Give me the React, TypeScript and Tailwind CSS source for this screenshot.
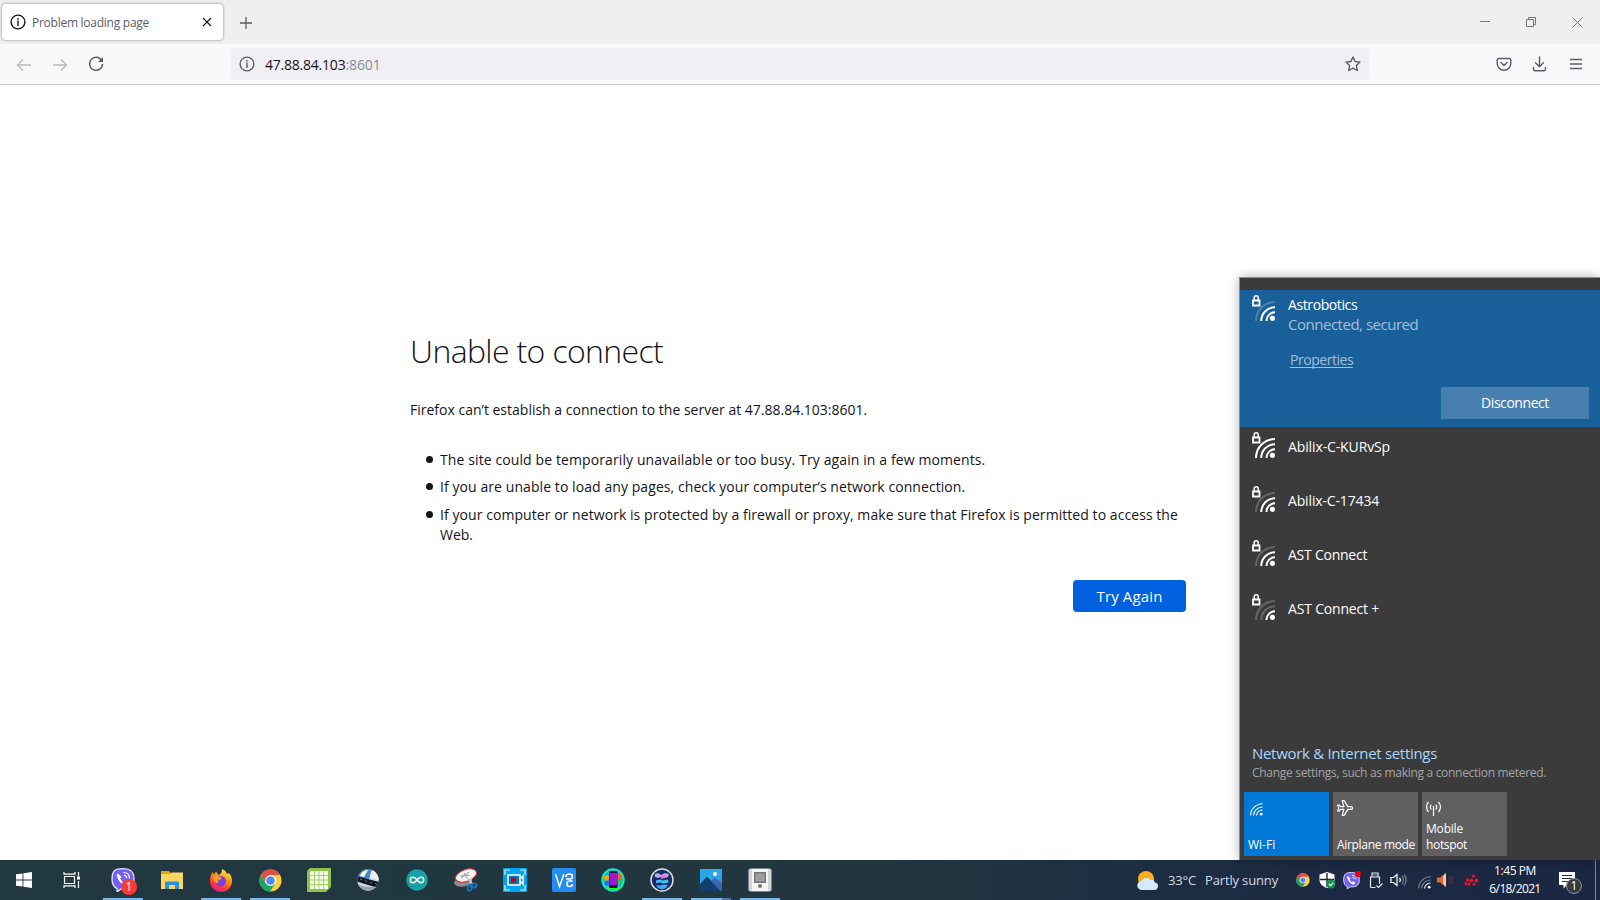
import React from "react";

type P = { children?: React.ReactNode; className?: string };
const T = ({ children, className = "" }: P) => (
  <span className={"whitespace-nowrap " + className}>{children}</span>
);

function Info({ color }: { color: string }) {
  return (
    <svg width="16" height="16" viewBox="0 0 16 16" fill="none" stroke={color} strokeWidth="1.4" className="shrink-0">
      <circle cx="8" cy="8" r="6.9" />
      <path d="M8 7v4.5" strokeLinecap="round" />
      <circle cx="8" cy="4.8" r=".9" fill={color} stroke="none" />
    </svg>
  );
}

function TabBar() {
  return (
    <header className="flex h-11 items-center bg-[#efefef]">
      <div className="ml-0.5 flex h-9 w-[221px] items-center rounded bg-white pl-2 shadow-[0_0_3px_rgba(0,0,0,0.45)]">
        <Info color="#15141a" />
        <T className="mt-0.5 ml-1.5 text-[12px] tracking-[-0.26px] text-[#5b5b66]">Problem loading page</T>
        <svg width="10" height="10" viewBox="0 0 10 10" className="mr-[11px] ml-auto" stroke="#15141a" strokeWidth="1.1">
          <path d="M1 1l8 8M9 1L1 9" />
        </svg>
      </div>
      <svg width="14" height="14" viewBox="0 0 14 14" className="mt-px ml-4" stroke="#5b5b66" strokeWidth="1.3">
        <path d="M7 1v12M1 7h12" />
      </svg>
      <div className="mr-[17px] ml-auto flex items-center gap-9 text-[#777]">
        <svg width="10" height="11" viewBox="0 0 10 11" stroke="currentColor"><path d="M0 4.500h10" /></svg>
        <svg width="10" height="11" viewBox="0 0 10 11" fill="none" stroke="currentColor"><path d="M.5 2.500h7v7h-7zM2.500 2.500v-2h7v7h-2" /></svg>
        <svg width="11" height="11" viewBox="0 0 11 11" stroke="currentColor"><path d="M.5.500l10 10M10.500.500l-10 10" /></svg>
      </div>
    </header>
  );
}

function Toolbar() {
  return (
    <nav className="flex h-[41px] items-center border-b border-[#cccccf] bg-[#f9f9fb]">
      <svg width="16" height="16" viewBox="0 0 16 16" fill="none" stroke="#b9b9bf" strokeWidth="1.3" className="mt-px ml-4"><path d="M15 8H1.500M7 2.500L1.500 8 7 13.500" /></svg>
      <svg width="16" height="16" viewBox="0 0 16 16" fill="none" stroke="#b9b9bf" strokeWidth="1.3" className="mt-px ml-5"><path d="M1 8h13.500M9 2.500L14.500 8 9 13.500" /></svg>
      <svg width="16" height="16" viewBox="0 0 16 16" fill="none" stroke="#5b5b66" strokeWidth="1.5" className="ml-5">
        <path d="M13.600 4.500A6.500 6.500 0 1 0 14.500 8" /><path d="M15 1v5h-5z" fill="#5b5b66" stroke="none" />
      </svg>
      <div className="ml-[127px] flex h-8 w-[1138px] items-center rounded bg-[#f0f0f4] pr-2 pl-[7.500px]">
        <Info color="#5b5b66" />
        <span className="mt-0.5 ml-[10.500px] flex text-[14px] leading-5">
          <T className="tracking-[-0.22px] text-[#15141a]">47.88.84.103</T>
          <T className="tracking-[-0.1px] text-[#8b8b94]">:8601</T>
        </span>
        <svg width="16" height="16" viewBox="0 0 16 16" fill="none" stroke="#5b5b66" strokeWidth="1.4" strokeLinejoin="round" className="ml-auto">
          <path d="M8 1l2.100 4.500 4.900.6-3.600 3.400.9 5L8 12.100l-4.300 2.400.9-5L1 6.100l4.900-.6z" />
        </svg>
      </div>
      <svg width="16" height="16" viewBox="0 0 16 16" fill="none" stroke="#5b5b66" strokeWidth="1.4" strokeLinecap="round" strokeLinejoin="round" className="ml-[127px]">
        <path d="M2.500 2.500h11a1.300 1.300 0 0 1 1.300 1.300V7.500a6.800 6.800 0 0 1-13.600 0V3.800a1.300 1.300 0 0 1 1.300-1.300z" /><path d="M4.800 6.500L8 9.500l3.200-3" />
      </svg>
      <svg width="16" height="16" viewBox="0 0 16 16" fill="none" stroke="#5b5b66" strokeWidth="1.400" strokeLinecap="round" strokeLinejoin="round" className="ml-5">
        <path d="M7.500 1v9.500M3.500 6.800l4 4 4-4M1.500 11.500v1.700a1.500 1.500 0 0 0 1.500 1.500h9a1.500 1.500 0 0 0 1.500-1.500v-1.700" />
      </svg>
      <svg width="12" height="12" viewBox="0 0 12 12" stroke="#5b5b66" strokeWidth="1.300" className="ml-[22px]"><path d="M0 1.500h12M0 6h12M0 10.500h12" /></svg>
    </nav>
  );
}

function Bullet({ children, className = "" }: P) {
  return (
    <li className={"flex " + className}>
      <span className="mt-1.5 mr-[7px] size-[7px] shrink-0 rounded-full bg-[#15141a]" />
      <span className="flex flex-col">{children}</span>
    </li>
  );
}

function ErrorPage() {
  return (
    <section className="w-[776px] text-[14px] leading-5 text-[#15141a]">
      <h1 className="flex h-12 items-center text-[32px] leading-[48px] font-light"><T className="tracking-[-0.64px]">Unable to connect</T></h1>
      <p className="mt-[25px]"><T>Firefox can’t establish a connection to the server at 47.88.84.103:8601.</T></p>
      <ul className="mt-[30px] flex flex-col pl-4">
        <Bullet><T className="tracking-[0.106px]">The site could be temporarily unavailable or too busy. Try again in a few moments.</T></Bullet>
        <Bullet className="mt-[7px]"><T className="tracking-[0.075px]">If you are unable to load any pages, check your computer’s network connection.</T></Bullet>
        <Bullet className="mt-2">
          <T className="tracking-[0.062px]">If your computer or network is protected by a firewall or proxy, make sure that Firefox is permitted to access the</T>
          <T>Web.</T>
        </Bullet>
      </ul>
      <div className="mt-[35px] flex justify-end">
        <button className="h-8 w-[113px] rounded bg-[#0061e0] text-[15px] text-[#fbfbfe]"><T className="tracking-[0.13px]">Try Again</T></button>
      </div>
    </section>
  );
}

function Signal({ level, dim }: { level: number; dim: string }) {
  const c = (n: number) => (level >= n ? "#fff" : dim);
  return (
    <svg width="24" height="27" viewBox="0 0 24 27" fill="none" strokeWidth="2" className="shrink-0">
      <path d="M1 5.500h6.500v5H1z" stroke="#fff" strokeWidth="1.800" />
      <path d="M2.200 5V2.800a2 2 0 0 1 4 0V5" stroke="#fff" strokeWidth="1.500" />
      <path d="M4 26A19 19 0 0 1 23 7" stroke={c(4)} />
      <path d="M9.200 26A13.800 13.800 0 0 1 23 12.200" stroke={c(3)} />
      <path d="M14.500 26A8.500 8.500 0 0 1 23 17.300" stroke={c(2)} />
      <circle cx="20.400" cy="23.300" r="2.600" fill="#fff" />
    </svg>
  );
}

function WifiGlyph({ dim }: { dim?: string }) {
  return (
    <svg width="13" height="13" viewBox="0 0 13 13" fill="none" stroke="#fff" strokeWidth="1.100">
      <path d="M.6 12.500A12 12 0 0 1 12.600.8" stroke={dim || "#fff"} /><path d="M3.600 12.500a9 9 0 0 1 9-8.500" stroke={dim || "#fff"} /><path d="M6.500 12.500a6 6 0 0 1 6-5.500" /><circle cx="11.200" cy="11.200" r="1.400" fill="#fff" stroke="none" />
    </svg>
  );
}

const networks = [
  { name: "Abilix-C-KURvSp", level: 4, tracking: "tracking-[-0.12px]" },
  { name: "Abilix-C-17434", level: 3, tracking: "tracking-[-0.15px]" },
  { name: "AST Connect", level: 3, tracking: "tracking-[-0.24px]" },
  { name: "AST Connect +", level: 2, tracking: "tracking-[-0.18px]" },
];

function NetworkPanel() {
  return (
    <aside className="absolute right-0 bottom-10 flex h-[583px] w-[361px] flex-col border-t border-l border-[#8c8c8c] bg-[#3b3b3b] text-[14px] leading-5 text-white shadow-[0_0_10px_rgba(0,0,0,0.3)]">
      <div className="mt-3 flex h-[137px] flex-col bg-[#19609a] pt-[5px] pr-[11px] pl-3">
        <div className="flex">
          <Signal level={3} dim="#4682b0" />
          <div className="ml-3 flex flex-col">
            <T className="tracking-[-0.4px]">Astrobotics</T>
            <T className="-mt-px text-[15px] tracking-[-0.48px] text-[#a3bfd7]">Connected, secured</T>
            <span className="mt-4 ml-0.5 flex"><T className="h-[18px] border-b border-[#a3bfd7] tracking-[-0.46px] text-[#a3bfd7]">Properties</T></span>
          </div>
        </div>
        <button className="mt-auto mb-2 h-8 w-[148px] self-end bg-[#4780ae]"><T className="tracking-[-0.44px]">Disconnect</T></button>
      </div>
      {networks.map((n) => (
        <div key={n.name} className="flex h-[54px] pt-[5px] pl-3">
          <Signal level={n.level} dim="#666" />
          <T className={"mt-[5px] ml-3 " + n.tracking}>{n.name}</T>
        </div>
      ))}
      <div className="mt-auto flex flex-col pl-3">
        <T className="text-[15px] tracking-[-0.3px] text-[#a6d8ff]">Network &amp; Internet settings</T>
        <T className="text-[12px] tracking-[-0.3px] text-[#a5a5a5]">Change settings, such as making a connection metered.</T>
      </div>
      <div className="mt-[9px] mb-1 ml-1 flex gap-1 text-[12px] leading-4">
        <div className="flex h-16 w-[85px] flex-col justify-between bg-[#0078d7] px-1 pt-[11px] pb-[3px]">
          <span className="ml-0.5"><WifiGlyph /></span><T>Wi-Fi</T>
        </div>
        <div className="flex h-16 w-[85px] flex-col justify-between bg-[#606060] px-1 pt-2 pb-[3px]">
          <svg width="16" height="16" viewBox="0 0 16 16" fill="none" stroke="#fff" strokeWidth="1.200" strokeLinejoin="round"><path d="M15.500 8c0-.9-.7-1.400-1.600-1.400h-3.100L7.300.7H5.200L6.900 6.600H3.600L2.300 5H.7L1.700 8l-1 3h1.600l1.300-1.600h3.300L5.200 15.300h2.100l3.500-5.900h3.100c.9 0 1.600-.5 1.600-1.400z" /></svg>
          <T className="tracking-[-0.32px]">Airplane mode</T>
        </div>
        <div className="flex h-16 w-[85px] flex-col justify-between bg-[#606060] px-1 pt-[9px] pb-[3px]">
          <svg width="16" height="15" viewBox="0 0 16 15" fill="none" stroke="#fff" strokeWidth="1.200"><path d="M7.500 5v10M5.300 3.500a4 4 0 0 0 0 5M9.700 3.500a4 4 0 0 1 0 5M2.500 1a7.500 7.500 0 0 0 0 10M12.500 1a7.500 7.500 0 0 1 0 10" /></svg>
          <span className="flex flex-col"><T className="tracking-[-0.19px]">Mobile</T><T className="tracking-[-0.34px]">hotspot</T></span>
        </div>
      </div>
    </aside>
  );
}

const Chrome = ({ s }: { s: number }) => (
  <svg width={s} height={s} viewBox="0 0 24 24">
    <circle cx="12" cy="12" r="11.500" fill="#ffcd40" />
    <path d="M12 .5A11.500 11.500 0 0 1 22 6.300H12L7 14.800 2 6.200A11.500 11.500 0 0 1 12 .5z" fill="#dd5144" />
    <path d="M2 6.200A11.500 11.500 0 0 0 11.500 23.500L17 14.900H7z" fill="#1da462" />
    <circle cx="12" cy="12" r="5.700" fill="#fff" /><circle cx="12" cy="12" r="4.500" fill="#4c8bf5" />
  </svg>
);

const Viber = ({ s }: { s: number }) => (
  <svg width={s} height={s} viewBox="0 0 24 24">
    <path d="M12 .7C4 .7 1 3 1 11c0 5 1.500 8 5 9.500V24l4-3h2c8 0 11-3 11-10S20 .7 12 .7z" fill="#7360f2" stroke="#e6e2ff" strokeWidth="1.300" />
    <path d="M7 5.500c-1.500 1-1.500 2.500-.5 4.500 1.500 3.500 4 6 7.500 7.500 1.500.6 3-.5 3.500-2l-3-2.300-1.700 1.300c-2-1-3-2.500-3.600-4.200L10.500 9z" fill="#fff" />
    <path d="M12.500 4.500c4 0 6 2.500 6 6M12.800 7.300c2 0 3 1.200 3 3" stroke="#fff" fill="none" strokeWidth="1.200" />
  </svg>
);

const appIcons: React.ReactNode[] = [
  <svg width="16" height="16" viewBox="0 0 16 16" fill="#fff" className="mr-0.5"><path d="M0 2.300L6.500 1.400v6.100H0zM7.400 1.300L16 0v7.500H7.400zM0 8.400h6.500v6.200L0 13.700zM7.400 8.400H16V16l-8.600-1.300z" /></svg>,
  <svg width="18" height="16" viewBox="0 0 18 16" fill="none" stroke="#fff" strokeWidth="1.200" className="mr-1"><path d="M1.500 4.500h10v7h-10zM1 0v2.200h11V0M1 16v-2.200h11V16M15.500 0v4M15.500 9v7" /><path d="M14 4.500h3v3h-3z" fill="#fff" stroke="none" /></svg>,
  <span className="relative flex"><Viber s={24} /><span className="absolute -right-[2px] -bottom-[3px] flex size-4 items-center justify-center rounded-full bg-[#fb3b30] text-[12px] text-white">1</span></span>,
  <svg width="22" height="18" viewBox="0 0 22 18"><path d="M0 0h8l1.500 2H22v16H0z" fill="#e5a50a" /><path d="M0 3h9l1.500-1.500H22V18H0z" fill="#ffd562" /><path d="M4 18v-6.500a1 1 0 0 1 1-1h12a1 1 0 0 1 1 1V18h-4v-4H8v4z" fill="#2d8fdd" /></svg>,
  <svg width="24" height="24" viewBox="0 0 24 24">
    <defs><linearGradient id="ff" x1=".8" y1="0" x2=".3" y2="1"><stop offset="0" stopColor="#fff34f" /><stop offset=".4" stopColor="#ff980e" /><stop offset=".75" stopColor="#ff3647" /><stop offset="1" stopColor="#e31587" /></linearGradient></defs>
    <path d="M13 1c3 1 4.500 3 5 5l2-1c2 2 3 5 3 8a11 11 0 0 1-22 0C1 9 2 6.500 3.500 4L5 6.500l2-3L9.500 7C11 6.500 13 5 13 1z" fill="url(#ff)" />
    <circle cx="11.800" cy="13.200" r="5.200" fill="#7542e5" /><path d="M4 9c3-1.500 5.500-1 8 .5 1.500 1 .5 2-1.500 2.200-1.500.3-2 1.800-1 3.300-3 .5-5.500-2-5.500-6z" fill="#ff9a1f" />
  </svg>,
  <Chrome s={23} />,
  <svg width="24" height="24" viewBox="0 0 24 24"><path d="M3 0h21v19l-5 5H0V3z" fill="#8bc34a" /><path d="M3 3h18v18H3z" fill="#f4fae6" /><path d="M3 7.500h18M3 12h18M3 16.500h18M7.500 3v18M12 3v18M16.500 3v18" stroke="#a4d26b" /></svg>,
  <svg width="22" height="22" viewBox="0 0 22 22">
    <defs><clipPath id="ball"><circle cx="11" cy="11" r="10.700" /></clipPath></defs>
    <g clipPath="url(#ball)"><path d="M0 0h22v22H0z" fill="#cfd9e4" /><path d="M0 9C1 1 8-2 16 0L12 10z" fill="#3f86cb" /><path d="M3 7c1-4 5-6 8-6L7 8z" fill="#fff" /><path d="M13 9c0-4 1-7 3-9l6 5v6z" fill="#e9eef3" /><path d="M0 15c6 3 14 4 20 2l-4 6H4z" fill="#98a3ae" /><path d="M-1 7l8 2 15 4v5l-6-.5L0 12.500z" fill="#10151b" /><path d="M3 9.500l2 1.500M8 11.500l2 1.500M13 13l2 1.500M18 14l2 1.500" stroke="#4c6379" strokeWidth="1.200" /></g>
  </svg>,
  <svg width="22" height="22" viewBox="0 0 22 22" fill="none"><circle cx="11" cy="11" r="10.700" fill="#17a1a5" /><path d="M11 11c-1.500-2-2.500-2.700-4-2.700a2.700 2.700 0 0 0 0 5.400c1.500 0 2.500-.7 4-2.700zm0 0c1.500-2 2.500-2.700 4-2.700a2.700 2.700 0 0 1 0 5.400c-1.500 0-2.500-.7-4-2.700z" stroke="#fff" strokeWidth="1.400" /></svg>,
  <svg width="24" height="24" viewBox="0 0 24 24" fill="none"><ellipse cx="9" cy="14" rx="9" ry="4.500" fill="#8a8a8a" transform="rotate(-8 9 14)" /><ellipse cx="12" cy="7.500" rx="11" ry="5.800" fill="#f4f4f4" stroke="#d33" transform="rotate(-20 12 7.500)" /><path d="M7 10l8-6M10 5l3 5M6 8l10-1" stroke="#999" /><path d="M13 10l6 6M18 9l-2 7" stroke="#c5ccd6" strokeWidth="1.400" /><ellipse cx="15.500" cy="20" rx="2" ry="2.700" stroke="#1877c9" strokeWidth="1.700" /><ellipse cx="20" cy="17.500" rx="2.500" ry="2" stroke="#1877c9" strokeWidth="1.700" /></svg>,
  <svg width="24" height="24" viewBox="0 0 24 24" fill="none"><path d="M0 0h24v24H0z" fill="#00a4f0" /><path d="M2 7V2h5M17 2h5v5M22 17v5h-5M7 22H2v-5" stroke="#d9f3ff" strokeWidth="1.200" /><path d="M5 7h12v10H5zM17 11l3-3v8l-3-3" fill="#087ab8" stroke="#fff" strokeWidth="1.500" /><path d="M8 9.500h5v5H8z" fill="#c00018" /></svg>,
  <svg width="24" height="24" viewBox="0 0 24 24" fill="none"><rect width="24" height="24" rx="2" fill="#258cf4" /><path d="M3.500 6l4 12.500L12 6M14 11h3.500c4 0 4-5 0-5-2.500 0-3.500 1-3.500 3M20.500 13h-3c-3.500 0-3.500 5.500 0 5.500 2 0 3-.8 3-2.500" stroke="#fff" strokeWidth="1.500" /></svg>,
  <svg width="24" height="24" viewBox="0 0 24 24"><circle cx="12" cy="12" r="10.800" fill="#12b9c9" stroke="#19e6c1" strokeWidth="1.800" /><circle cx="5.500" cy="10" r="2.800" fill="#f0a018" /><circle cx="18.500" cy="8.500" r="2.800" fill="#e8682c" /><circle cx="18.500" cy="14" r="2.400" fill="#1bd43a" /><circle cx="6" cy="15" r="2.200" fill="#2468ed" /><path d="M6 18.500h12.500v2.500H6z" fill="#1bff35" /><rect x="8" y="3" width="8.500" height="17" rx="1" fill="#25123d" /><path d="M8.500 5h7.500v12H8.500z" fill="#a018d2" /></svg>,
  <svg width="24" height="24" viewBox="0 0 24 24" fill="none"><circle cx="12" cy="12" r="11" fill="#142c61" stroke="#d9dce7" strokeWidth="1.500" /><path d="M5 6l3-1 3 2 4-2 4 1-1 3-3 1-4-1-3 1-3-1z" fill="#c3a0ef" /><path d="M11 8l5-1-1 3-4 1z" fill="#f56ad2" /><path d="M6 12.500l4-1 3 1 5-1 .5 3-5 1-3.500-1-4 .5z" fill="#43bdf5" /><path d="M6 17l4 .5 3-1 5 .5-2 3-4 1.500L8 20z" fill="#45a4ee" /></svg>,
  <svg width="22" height="22" viewBox="0 0 22 22"><path d="M0 0h22v22H0z" fill="#28a8ea" /><path d="M22 9l-8 4v9h8z" fill="#5a83cd" /><path d="M0 15l7-7.500L21 22H0z" fill="#143d70" /><path d="M11 12l4-3.500 7 6.500v7h-1z" fill="#3568ae" /><circle cx="15" cy="5" r="2" fill="#fff" /></svg>,
  <svg width="24" height="24" viewBox="0 0 24 24"><rect x=".5" y=".5" width="23" height="23" rx="2" fill="#d5d5d5" /><path d="M4 1h16v22H4z" fill="#f4f4f4" /><path d="M6 4h12v11H6z" fill="#73767a" /><path d="M7.500 5.500h9v8h-9z" fill="#9da0a2" /><circle cx="12" cy="18" r="2" fill="#777" /></svg>,
];
const running = [2, 4, 5, 13, 14, 15];

function Taskbar() {
  return (
    <footer className="flex h-10 bg-[linear-gradient(90deg,#223840_0%,#21363f_55%,#1c2c42_75%,#1a2743_100%)] text-white">
      <div className="flex pl-[0.5px]">
        {appIcons.map((ic, i) => (
          <div key={i} className="flex h-10 w-[49px] flex-col items-center">
            <span className="flex h-[38px] items-center pt-0.5">{ic}</span>
            {running.includes(i) && (
              <span className="flex h-0.5 w-10 bg-[#76b9ed]">{i === 14 && <span className="ml-auto w-[9px] bg-[#4f7fa6]" />}</span>
            )}
          </div>
        ))}
      </div>
      <div className="ml-auto flex items-center">
        <svg width="21" height="19" viewBox="0 0 21 19"><circle cx="9" cy="8" r="8" fill="#ffad1f" /><path d="M5 19a4.500 4.500 0 0 1-.5-9C6 6.500 11 6 13 9c3-1 4.500.5 4.700 2.500C20 11.500 21 13 21 15s-1.500 4-3.500 4z" fill="#d3ebfc" /></svg>
        <T className="mt-0.5 ml-[10px] text-[13px] tracking-[-0.15px] text-[#d5dbe2]">33°C</T>
        <T className="mt-0.5 ml-[9px] text-[13px] tracking-[-0.15px] text-[#d5dbe2]">Partly sunny</T>
        <span className="ml-[18px]"><Chrome s={14} /></span>
        <svg width="17" height="17" viewBox="0 0 17 17" className="ml-[9px]"><path d="M8 0l7.500 2.500V8c0 4-3.500 6.500-7.500 8C4 14.500.5 12 .5 8V2.500z" fill="#fff" /><path d="M8 1v14M1 7.500h14" stroke="#1b2943" strokeWidth="1.400" /><circle cx="12" cy="12" r="4.500" fill="#13934b" /><path d="M9.800 12l1.700 1.700 2.800-3" stroke="#fff" fill="none" strokeWidth="1.200" /></svg>
        <span className="relative ml-[7px] flex"><Viber s={17} /><span className="absolute -top-px -right-px size-[6px] rounded-full bg-red-600" /></span>
        <svg width="14" height="17" viewBox="0 0 14 17" fill="none" stroke="#e8ebef" strokeWidth="1.200" className="ml-[9px]"><path d="M3 5V1h6v4M1.500 15.500V5h9v7M1.500 15.500h5M7.500 13.500l2 2 4-4M5 2.500v1M7 2.500v1" /></svg>
        <svg width="17" height="14" viewBox="0 0 17 14" fill="none" stroke="#fff" strokeWidth="1.200" className="ml-[7px]"><path d="M1 4.500h2.500L7 1.500v11l-3.500-3H1z" /><path d="M9.500 5a3 3 0 0 1 0 4" /><path d="M11.700 3a5.500 5.500 0 0 1 0 8M14 1.500a8 8 0 0 1 0 11" stroke="#7b8495" /></svg>
        <span className="mt-1 ml-[11px]"><WifiGlyph dim="#7b8495" /></span>
        <svg width="17" height="14" viewBox="0 0 17 14" fill="none" className="ml-[6px]"><path d="M0 4.500h3L9 0v14l-6-4.500H0z" fill="#e2643a" /><path d="M6 3l3-3v14L6 11z" fill="#ffc4a2" /><path d="M11.500 4a4 4 0 0 1 0 6M14 2.500a7 7 0 0 1 0 9" stroke="#662d35" strokeWidth="1.200" /></svg>
        <svg width="15" height="13" viewBox="0 0 15 13" fill="#e0182d" className="ml-[10px]"><circle cx="7.500" cy="6.500" r="2" /><circle cx="3.500" cy="6" r="1.700" /><circle cx="1.800" cy="9.500" r="1.500" /><circle cx="5" cy="10" r="1.700" /><circle cx="9.500" cy="2" r="1.700" /><circle cx="12.500" cy="6.500" r="2" /><circle cx="10" cy="10" r="1.600" /></svg>
        <span className="ml-[10px] flex w-[52px] flex-col items-center text-[12px] leading-[18px]"><T className="tracking-[-0.41px]">1:45 PM</T><T className="tracking-[-0.62px]">6/18/2021</T></span>
        <span className="relative ml-[18px] flex">
          <svg width="16" height="17" viewBox="0 0 16 17"><path d="M0 0h16v13h-8l-3.500 3.500V13H0z" fill="#fff" /><path d="M3 3.500h10M3 6.500h10M3 9.500h6" stroke="#1b2943" strokeWidth="1.200" /></svg>
          <span className="absolute top-1.5 left-[7px] flex size-4 items-center justify-center rounded-full border border-[#8d929a] bg-[#363a42] text-[12px]">1</span>
        </span>
        <span className="mr-1 ml-[20px] h-10 w-px bg-[#7d8798]" />
      </div>
    </footer>
  );
}

export default function App() {
  return (
    <div className="relative flex h-[900px] w-[1600px] flex-col overflow-hidden bg-white font-['Open_Sans',sans-serif]">
      <TabBar />
      <Toolbar />
      <main className="flex flex-1 pt-[242px] pl-[410px]"><ErrorPage /></main>
      <Taskbar />
      <NetworkPanel />
    </div>
  );
}
